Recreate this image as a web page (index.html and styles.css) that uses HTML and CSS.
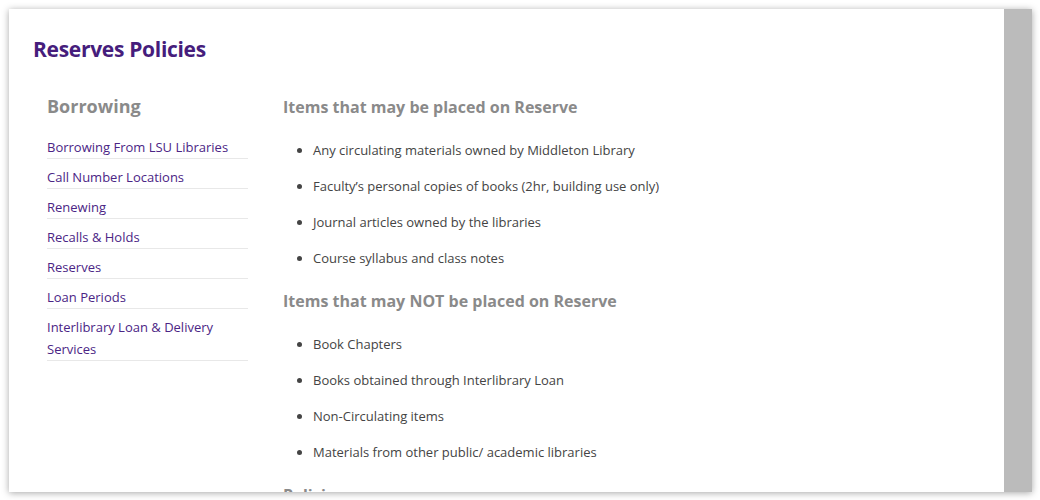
FILE: index.html
```html
<!DOCTYPE html>
<html>
<head>
<meta charset="utf-8">
<link rel="stylesheet" href="styles.css">
</head>
<body>
<div class="frame">
  <div class="page">
    <h1 class="title">Reserves Policies</h1>
    <div class="layout">
      <aside class="sidebar">
        <h2 class="side-heading">Borrowing</h2>
        <ul class="side-nav">
          <li><a href="#">Borrowing From LSU Libraries</a></li>
          <li><a href="#">Call Number Locations</a></li>
          <li><a href="#">Renewing</a></li>
          <li><a href="#">Recalls &amp; Holds</a></li>
          <li><a href="#">Reserves</a></li>
          <li><a href="#">Loan Periods</a></li>
          <li><a href="#">Interlibrary Loan &amp; Delivery Services</a></li>
        </ul>
      </aside>
      <main class="content">
        <h3 class="section-heading">Items that may be placed on Reserve</h3>
        <ul class="items">
          <li>Any circulating materials owned by Middleton Library</li>
          <li>Faculty’s personal copies of books (2hr, building use only)</li>
          <li>Journal articles owned by the libraries</li>
          <li>Course syllabus and class notes</li>
        </ul>
        <h3 class="section-heading">Items that may NOT be placed on Reserve</h3>
        <ul class="items">
          <li>Book Chapters</li>
          <li>Books obtained through Interlibrary Loan</li>
          <li>Non-Circulating items</li>
          <li>Materials from other public/ academic libraries</li>
        </ul>
        <h3 class="section-heading">Policies</h3>
      </main>
    </div>
  </div>
  <div class="scrollbar"></div>
</div>
</body>
</html>
```
FILE: styles.css
```css
html, body {
  margin: 0;
  padding: 0;
  background: #ffffff;
}
body {
  font-family: "Open Sans", "Noto Sans", "DejaVu Sans", sans-serif;
  padding: 9px 8px 8px 9px;
}
.frame {
  display: flex;
  width: 1023px;
  height: 483px;
  box-shadow: 0 1px 7px rgba(0, 0, 0, 0.35);
}
.page {
  flex: 1;
  background: #fff;
  overflow: hidden;
  padding: 26px 24px 0 24px;
}
.scrollbar {
  width: 28px;
  background: #bbbbbb;
}
.title {
  margin: 0;
  font-size: 21px;
  line-height: 28px;
  font-weight: 700;
  color: #461d7c;
  letter-spacing: -0.3px;
}
.layout {
  display: flex;
  margin-top: 29px;
}
.sidebar {
  width: 201px;
  margin-left: 14px;
  margin-right: 35px;
  flex: none;
}
.side-heading {
  margin: 0 0 16px 0;
  font-size: 18px;
  line-height: 28px;
  font-weight: 700;
  color: #8a8a8a;
}
.side-nav {
  list-style: none;
  margin: 0;
  padding: 0;
}
.side-nav li {
  border-bottom: 1px solid #e8e8e8;
  margin-bottom: 7px;
  font-size: 13px;
  line-height: 22px;
}
.side-nav a {
  color: #4b2585;
  text-decoration: none;
}
.content {
  flex: 1;
  padding-top: 1px;
}
.section-heading {
  margin: 0;
  font-size: 16px;
  line-height: 28px;
  font-weight: 700;
  color: #8a8a8a;
}
.items {
  margin: 18px 0 18px 0;
  padding: 0 0 0 30px;
  list-style: disc;
}
.items li {
  font-size: 13px;
  line-height: 22px;
  color: #444;
  margin-bottom: 14px;
}
.items li::marker {
  color: #444;
}
```
